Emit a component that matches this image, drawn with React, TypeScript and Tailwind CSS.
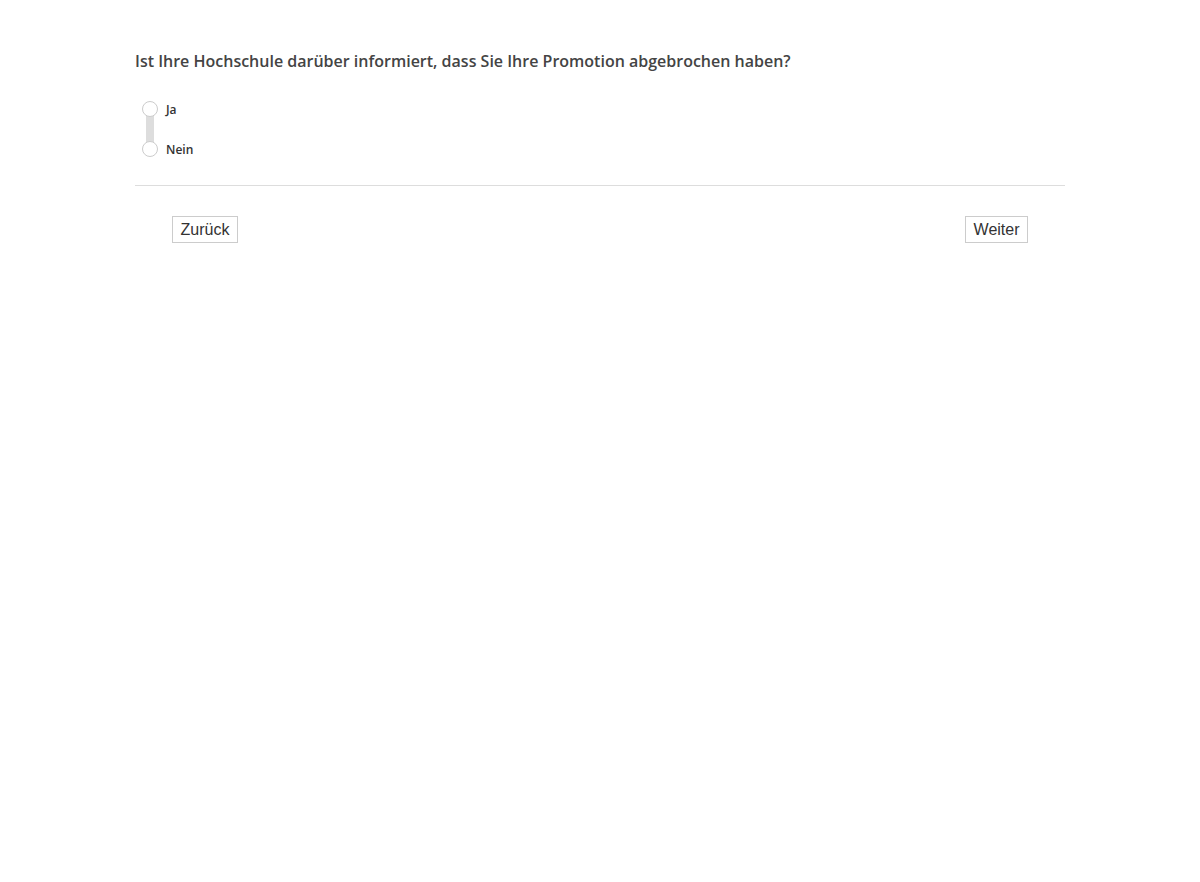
export default function App() {
  return (
    <div className="min-h-[882px] bg-white font-['Open_Sans',sans-serif]">
      <div className="mx-auto w-[930px] pt-[50px]">
        <h1 className="text-[16px] leading-[22px] font-semibold text-[#444]">
          Ist Ihre Hochschule darüber informiert, dass Sie Ihre Promotion abgebrochen haben?
        </h1>
        <div className="relative mt-[29px] ml-[7px] flex flex-col gap-[24px] pb-[28px]">
          {/* gray connector between radio buttons */}
          <div className="absolute left-[4px] top-[14px] h-[28px] w-[8px] bg-[#ddd]" />
          {["Ja", "Nein"].map((label) => (
            <label key={label} className="relative flex items-center gap-[8px]">
              <span className="block h-[16px] w-[16px] rounded-full border border-[#ccc] bg-white" />
              <span className="relative top-[1px] text-[12px] leading-[16px] font-semibold text-[#333]">{label}</span>
            </label>
          ))}
        </div>
        <div className="border-t border-[#ddd]" />
        <div className="flex justify-between px-[37px] pt-[30px]">
          <button className="h-[27px] border border-[#ccc] bg-white px-[7.5px] font-['Liberation_Sans',sans-serif] text-[16px] leading-[25px] text-[#333]">
            Zurück
          </button>
          <button className="h-[27px] border border-[#ccc] bg-white px-[7.5px] font-['Liberation_Sans',sans-serif] text-[16px] leading-[25px] text-[#333]">
            Weiter
          </button>
        </div>
      </div>
    </div>
  );
}
